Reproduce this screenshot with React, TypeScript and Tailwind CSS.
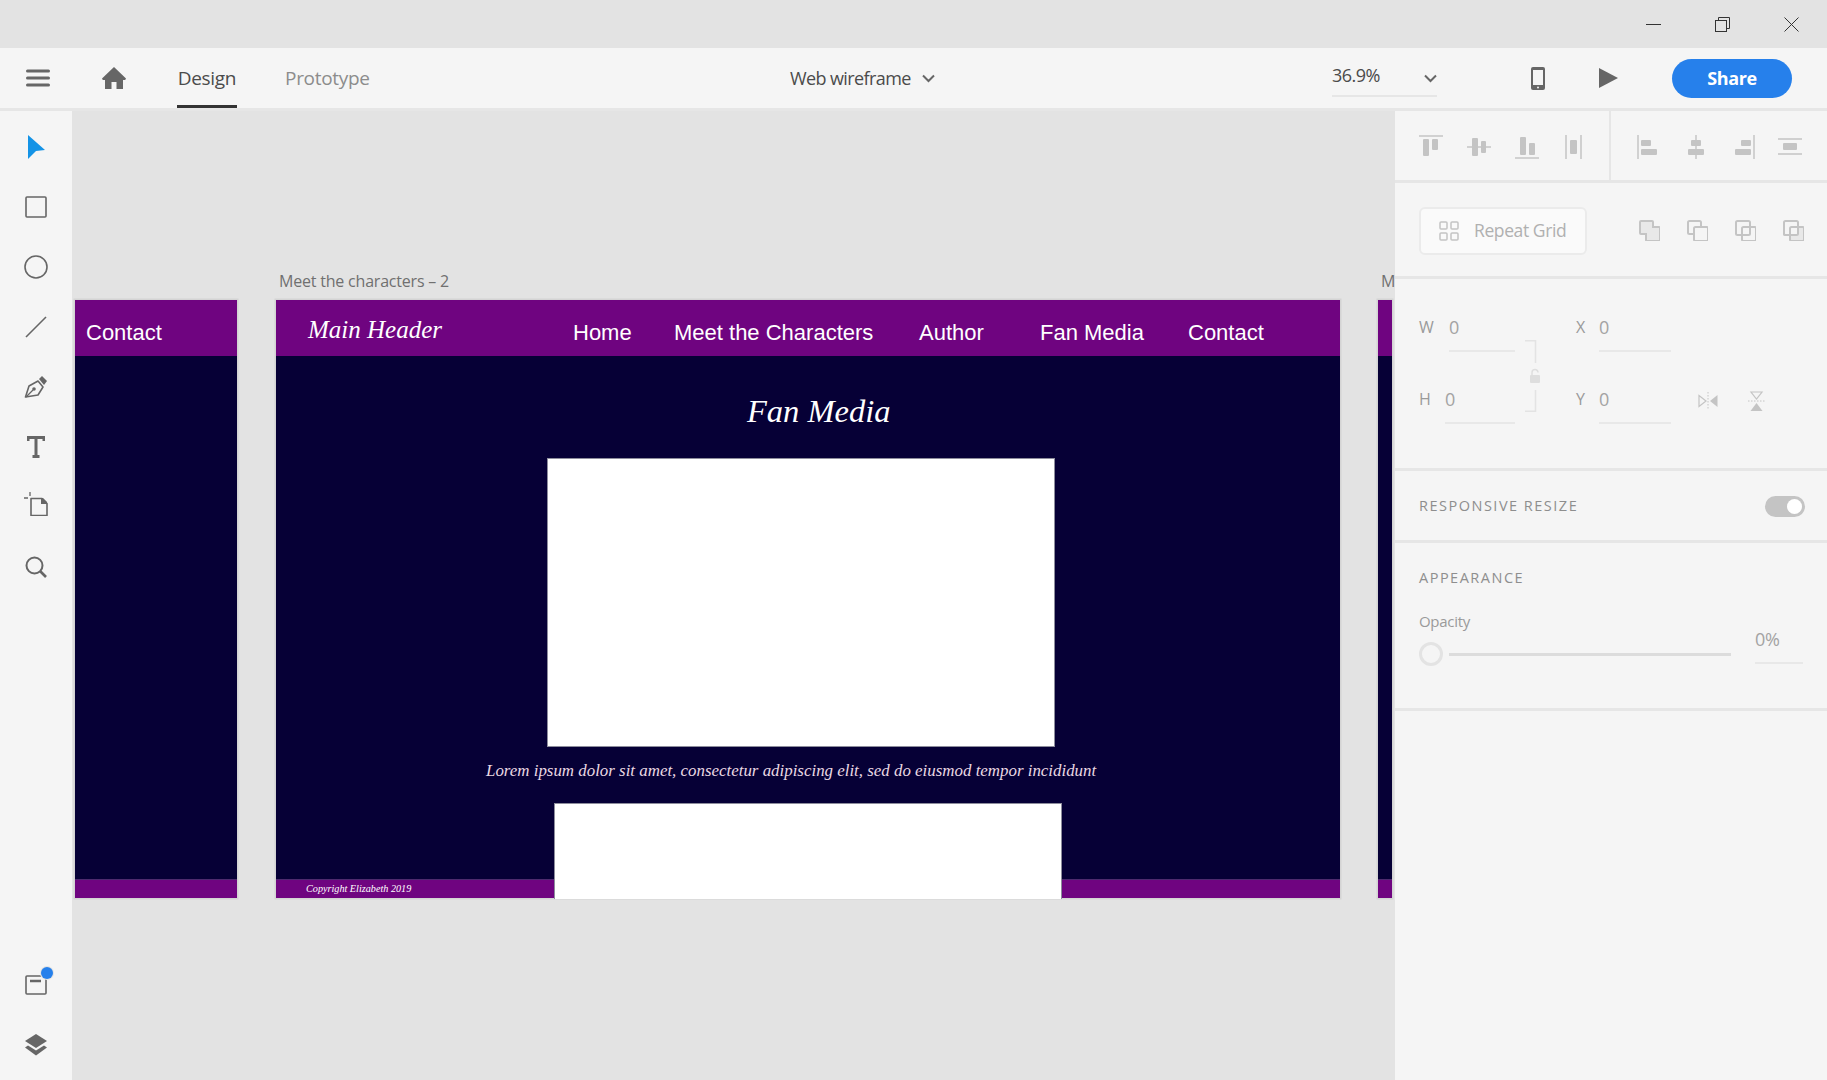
import React from 'react';

const Ico = ({ w, h, children, className = '' }: { w: number; h: number; children: React.ReactNode; className?: string }) => (
  <svg width={w} height={h} viewBox={`0 0 ${w} ${h}`} fill="none" className={`block shrink-0 ${className}`}>
    {children}
  </svg>
);

const G = '#c4c4c4';
const D = '#666666';

const alignIcons = [
  <>
    <path d="M0 1h24" stroke={G} strokeWidth="1.5" />
    <rect x="4" y="4" width="6" height="17" rx="1" fill={G} />
    <rect x="13" y="4" width="6" height="11" rx="1" fill={G} />
  </>,
  <>
    <path d="M0 12h24" stroke={G} strokeWidth="1.5" />
    <rect x="5" y="3" width="6" height="18" rx="1" fill={G} />
    <rect x="14" y="6" width="5" height="12" rx="1" fill={G} />
  </>,
  <>
    <path d="M0 23h24" stroke={G} strokeWidth="1.5" />
    <rect x="5" y="2" width="6" height="18" rx="1" fill={G} />
    <rect x="14" y="8" width="6" height="12" rx="1" fill={G} />
  </>,
  <>
    <path d="M3 0v24M18 0v24" stroke={G} strokeWidth="1.5" />
    <rect x="7" y="5" width="7" height="14" rx="1" fill={G} />
  </>,
  <>
    <path d="M1 0v24" stroke={G} strokeWidth="1.5" />
    <rect x="4" y="5" width="10" height="6" rx="1" fill={G} />
    <rect x="4" y="14" width="16" height="6" rx="1" fill={G} />
  </>,
  <>
    <path d="M12 0v24" stroke={G} strokeWidth="1.5" />
    <rect x="7" y="5" width="10" height="6" rx="1" fill={G} />
    <rect x="4" y="14" width="16" height="6" rx="1" fill={G} />
  </>,
  <>
    <path d="M23 0v24" stroke={G} strokeWidth="1.5" />
    <rect x="10" y="5" width="10" height="6" rx="1" fill={G} />
    <rect x="4" y="14" width="16" height="6" rx="1" fill={G} />
  </>,
  <>
    <path d="M0 4h24M0 19h24" stroke={G} strokeWidth="1.5" />
    <rect x="5" y="8" width="14" height="7" rx="1" fill={G} />
  </>,
];

const boolIcons = [
  <path d="M2 1h11a1 1 0 0 1 1 1v5h6a1 1 0 0 1 1 1v12a1 1 0 0 1-1 1H8a1 1 0 0 1-1-1v-6H2a1 1 0 0 1-1-1V2a1 1 0 0 1 1-1z" fill="#e8e8e8" stroke={G} strokeWidth="2" />,
  <>
    <rect x="1" y="1" width="13" height="13" rx="1.5" stroke={G} strokeWidth="2" />
    <rect x="7" y="7" width="14" height="14" rx="1.5" fill="#f5f5f5" stroke={G} strokeWidth="2" />
  </>,
  <>
    <rect x="1" y="1" width="14" height="14" rx="1.5" stroke={G} strokeWidth="2" />
    <rect x="7" y="7" width="14" height="14" rx="1.5" stroke={G} strokeWidth="2" />
  </>,
  <>
    <path d="M15 8h5v12H8v-5h7z" fill="#e8e8e8" />
    <path d="M1 2.500V14a1 1 0 0 0 1 1h5" stroke={G} strokeWidth="2" />
    <rect x="1" y="1" width="14" height="14" rx="1.5" stroke={G} strokeWidth="2" />
    <rect x="7" y="7" width="14" height="14" rx="1.5" stroke={G} strokeWidth="2" />
  </>,
];

const railTop = [
  <Ico w={17} h={24}><path d="M0 0 17 15l-9 1-8 8z" fill="#1493e6" /></Ico>,
  <Ico w={22} h={22}><rect x="1" y="1" width="20" height="20" rx="1" stroke={D} strokeWidth="1.6" /></Ico>,
  <Ico w={24} h={24}><circle cx="12" cy="12" r="11" stroke={D} strokeWidth="1.6" /></Ico>,
  <Ico w={22} h={22}><path d="M1 21 21 1" stroke={D} strokeWidth="1.6" /></Ico>,
  <Ico w={24} h={24}>
    <path d="M1.500 22 5 11l9-5 5 6-5 8z" stroke={D} strokeWidth="1.6" strokeLinejoin="round" />
    <path d="m15 4 3-3 5 5-3 4z" fill={D} />
    <path d="m2 22 7-7" stroke={D} strokeWidth="1.2" />
    <circle cx="10" cy="14" r="1.800" fill={D} />
  </Ico>,
  <Ico w={18} h={22}>
    <path d="M1 5V1.500h16V5M9 1.500V20.500M5.500 20.500h7" stroke={D} strokeWidth="3" />
  </Ico>,
  <Ico w={24} h={24} className="-translate-y-[3px]">
    <path d="M7 6.500h11l5 5v12H7z" stroke={D} strokeWidth="1.6" strokeLinejoin="round" />
    <path d="M17 6h2l4 4v2h-6z" fill={D} />
    <path d="M6 0v4M0 6h4" stroke={D} strokeWidth="1.300" />
  </Ico>,
  <Ico w={22} h={22}>
    <circle cx="9.500" cy="9.500" r="8" stroke={D} strokeWidth="2" />
    <path d="m15 15 6 6" stroke={D} strokeWidth="2.600" />
  </Ico>,
];

const Field = ({ label, labelW, inputW, mb = '' }: { label: string; labelW: string; inputW: string; mb?: string }) => (
  <div className={`flex items-start ${mb}`}>
    <span className={`${labelW} text-[16px] leading-[36px] text-[#9a9a9a]`}>{label}</span>
    <span className={`${inputW} h-[43px] border-b-2 border-[#e8e8e8] text-[18px] leading-[36px] text-[#a3a3a3]`}>0</span>
  </div>
);

const Artboard = ({ className, children }: { className: string; children: React.ReactNode }) => (
  <div className={`absolute top-[300px] h-[598px] flex flex-col bg-[#060036] shadow-[0_0_0_1.5px_#d4d4d4] ${className}`}>{children}</div>
);

export default function App() {
  return (
    <div className="w-[1827px] h-[1080px] overflow-hidden flex flex-col bg-[#e3e3e3] font-['Open_Sans',sans-serif] text-[#4b4b4b]">
      {/* window chrome */}
      <div className="h-12 shrink-0 flex items-center justify-end gap-[54px] pr-[28px]">
        <Ico w={15} h={15}><path d="M0 7.500h15" stroke="#333" strokeWidth="1" /></Ico>
        <Ico w={15} h={15}>
          <rect x="0.500" y="3.500" width="11" height="11" stroke="#333" />
          <path d="M3.500 3.500V.500h11v11h-3" stroke="#333" />
        </Ico>
        <Ico w={15} h={15}><path d="m.500.500 14 14M14.500.500l-14 14" stroke="#333" /></Ico>
      </div>

      {/* top bar */}
      <div className="h-[63px] shrink-0 flex items-center bg-[#f5f5f5] border-b-[3px] border-[#e6e6e6] relative z-20">
        <div className="pl-[26px] w-[102px]">
          <Ico w={24} h={18}><path d="M1.500 2h21M1.500 9h21M1.500 16h21" stroke={D} strokeWidth="3" strokeLinecap="round" /></Ico>
        </div>
        <div className="w-[75px]">
          <Ico w={24} h={22}>
            <path d="M12 0 24 11.500l-.8 1.500H21v9h-6.500v-7h-5v7H3v-9H.8L0 11.500z" fill={D} />
          </Ico>
        </div>
        <div className="h-full w-[60px] flex items-center justify-center border-b-[3px] border-[#333] text-[19px] tracking-[-0.3px] pt-[3px]">Design</div>
        <div className="ml-[48px] w-[84px] text-[19px] tracking-[-0.3px] text-[#8c8c8c]">Prototype</div>
        <div className="ml-[421px] w-[120px] text-[18px] tracking-[-0.6px] whitespace-nowrap">Web wireframe</div>
        <Ico w={13} h={9} className="ml-[12px]"><path d="m1 1.500 5.500 5.500L12 1.500" stroke={D} strokeWidth="2" /></Ico>
        <div className="ml-[397px] w-[105px] h-[37px] flex items-start justify-between border-b-2 border-[#e6e6e6] text-[18px] leading-[31px] tracking-[-0.5px]">
          <span>36.9%</span>
          <Ico w={13} h={9} className="mt-[14px]"><path d="m1 1.500 5.500 5.500L12 1.500" stroke={D} strokeWidth="2" /></Ico>
        </div>
        <Ico w={14} h={23} className="ml-[94px]">
          <rect width="14" height="23" rx="2" fill={D} />
          <rect x="2" y="3" width="10" height="15" fill="#f5f5f5" />
          <circle cx="7" cy="20.500" r="1" fill="#f5f5f5" />
        </Ico>
        <Ico w={19} h={20} className="ml-[54px]"><path d="M0 0 19 10 0 20z" fill={D} /></Ico>
        <button className="ml-[54px] w-[120px] h-[39px] rounded-full bg-[#2680eb] text-white text-[18px] font-bold tracking-[-0.4px]">Share</button>
      </div>

      <div className="flex-1 flex min-h-0">
        {/* tool rail */}
        <div className="w-[72px] shrink-0 bg-[#f5f5f5] flex flex-col justify-between items-center py-[6px]">
          <div className="flex flex-col items-center">
            {railTop.map((icon, i) => (
              <div key={i} className="w-[72px] h-[60px] flex items-center justify-center">{icon}</div>
            ))}
          </div>
          <div className="flex flex-col items-center">
            <div className="relative h-[60px] w-[72px] flex items-center justify-center -translate-y-px">
              <Ico w={22} h={20}>
                <rect x="1" y="1" width="20" height="18" rx="1" stroke={D} strokeWidth="1.6" />
                <path d="M5 6h11" stroke={D} strokeWidth="2.500" />
              </Ico>
              <span className="absolute top-[12px] left-[41px] w-3 h-3 rounded-full bg-[#2680eb] shadow-[0_0_0_1px_#e3e3e3]" />
            </div>
            <div className="h-[58px] w-[72px] flex items-center justify-center">
              <Ico w={22} h={22}>
                <path d="M11 0 22 7l-11 7L0 7z" fill={D} />
                <path d="m3 11.500 8 5 8-5 3 2-11 8-11-8z" fill={D} />
              </Ico>
            </div>
          </div>
        </div>

        {/* canvas */}
        <div className="relative flex-1 min-w-0 overflow-hidden">
          <div className="absolute inset-0 -left-[72px] -top-[111px]">
            <span className="absolute left-[279px] top-[269px] text-[16px] tracking-[-0.2px] text-[#707070] whitespace-nowrap">Meet the characters – 2</span>
            <span className="absolute left-[1381px] top-[269px] text-[16px] text-[#707070]">Meet</span>

            <Artboard className="left-[75px] w-[162px]">
              <div className="h-[56px] shrink-0 bg-[#6f0480] flex items-center pl-[11px] pt-[9px] font-['Liberation_Sans',sans-serif] text-[22px] text-white">Contact</div>
              <div className="flex-1" />
              <div className="h-[19px] shrink-0 bg-[#6f0480] border-t border-[#4d2a6e]" />
            </Artboard>

            <Artboard className="left-[276px] w-[1064px]">
              <div className="h-[56px] shrink-0 bg-[#6f0480] flex items-center pt-[9px] text-white font-['Liberation_Sans',sans-serif] text-[22px] whitespace-nowrap">
                <span className="ml-[32px] w-[135px] -mt-[5px] font-['Liberation_Serif',serif] italic text-[25px]">Main Header</span>
                <span className="ml-[130px] w-[59px]">Home</span>
                <span className="ml-[42px] w-[201px]">Meet the Characters</span>
                <span className="ml-[44px] w-[66px]">Author</span>
                <span className="ml-[55px] w-[104px]">Fan Media</span>
                <span className="ml-[44px]">Contact</span>
              </div>
              <div className="h-[523px] shrink-0 flex flex-col relative z-10">
                <h1 className="ml-[471px] mt-[33px] h-[44px] shrink-0 leading-[44px] font-['Liberation_Serif',serif] italic text-[32.500px] text-white whitespace-nowrap">Fan Media</h1>
                <div className="ml-[271px] mt-[25px] w-[508px] h-[289px] shrink-0 bg-white border border-[#8d8d9c]" />
                <p className="ml-[210px] mt-[12px] h-[24px] shrink-0 leading-[24px] font-['Liberation_Serif',serif] italic text-[16.900px] text-[#ead9e3] whitespace-nowrap">Lorem ipsum dolor sit amet, consectetur adipiscing elit, sed do eiusmod tempor incididunt</p>
                <div className="ml-[278px] mt-[20px] w-[508px] h-[96px] shrink-0 bg-white border border-[#8d8d9c] border-b-0" />
              </div>
              <div className="h-[19px] shrink-0 bg-[#6f0480] border-t border-[#4d2a6e] flex items-center pl-[30px] font-['Liberation_Serif',serif] italic text-[10.200px] text-white">Copyright Elizabeth 2019</div>
            </Artboard>

            <Artboard className="left-[1378px] w-[14px]">
              <div className="h-[56px] shrink-0 bg-[#6f0480]" />
              <div className="flex-1" />
              <div className="h-[19px] shrink-0 bg-[#6f0480] border-t border-[#4d2a6e]" />
            </Artboard>
          </div>
        </div>

        {/* property inspector */}
        <div className="w-[432px] shrink-0 bg-[#f5f5f5] relative z-10 flex flex-col">
          <div className="h-[72px] shrink-0 flex border-b-[3px] border-[#e6e6e6]">
            <div className="w-[216px] flex items-center gap-[24px] pt-[2px] pl-[24px] border-r-2 border-[#e6e6e6]">
              {alignIcons.slice(0, 4).map((icon, i) => <Ico key={i} w={24} h={24}>{icon}</Ico>)}
            </div>
            <div className="flex items-center gap-[23px] pt-[2px] pl-[26px]">
              {alignIcons.slice(4).map((icon, i) => <Ico key={i} w={24} h={24}>{icon}</Ico>)}
            </div>
          </div>

          <div className="h-[96px] shrink-0 flex items-center pt-[2px] pl-[24px] border-b-[3px] border-[#e6e6e6]">
            <div className="w-[168px] h-[48px] flex items-center pl-[18px] gap-[15px] rounded-md border-2 border-[#ebebeb] bg-[#fafafa] text-[17.500px] tracking-[-0.4px] text-[#b0b0b0] whitespace-nowrap">
              <Ico w={20} h={20}>
                <rect x="1" y="1" width="7" height="7" rx="1" stroke={G} strokeWidth="1.500" />
                <rect x="12" y="1" width="7" height="7" rx="1" stroke={G} strokeWidth="1.500" />
                <rect x="1" y="12" width="7" height="7" rx="1" stroke={G} strokeWidth="1.500" />
                <rect x="12" y="12" width="7" height="7" rx="1" stroke={G} strokeWidth="1.500" />
              </Ico>
              Repeat Grid
            </div>
            <div className="ml-[52px] flex gap-[27px]">
              {boolIcons.map((icon, i) => <Ico key={i} w={21} h={21}>{icon}</Ico>)}
            </div>
          </div>

          <div className="h-[192px] shrink-0 flex items-start pt-[30px] pl-[24px] border-b-[3px] border-[#e6e6e6]">
            <div className="flex flex-col w-[105px]">
              <Field label="W" labelW="w-[30px]" inputW="w-[66px]" mb="mb-[29px]" />
              <Field label="H" labelW="w-[26px]" inputW="w-[70px]" />
            </div>
            <Ico w={16} h={72} className="mt-[31px]">
              <path d="M1 .800h10.500V23M11.500 50v21.200H1" stroke="#e3e3e3" strokeWidth="1.500" />
              <rect x="6" y="35" width="10" height="8" rx="1" fill="#dedede" />
              <path d="M8 35v-2.500a3 3 0 0 1 6 0" stroke="#dedede" strokeWidth="1.500" />
            </Ico>
            <div className="ml-[36px] flex flex-col w-[95px]">
              <Field label="X" labelW="w-[23px]" inputW="w-[72px]" mb="mb-[29px]" />
              <Field label="Y" labelW="w-[23px]" inputW="w-[72px]" />
            </div>
            <div className="ml-[27px] mt-[82px] flex items-center gap-[30px]">
              <Ico w={20} h={18}>
                <path d="M1 3.500v11l7-5.500z" stroke={G} strokeWidth="1.200" />
                <path d="M19.500 3v12l-7.500-6z" fill={G} />
                <path d="M10 0v18" stroke={G} strokeWidth="1" strokeDasharray="1.500 1.500" />
              </Ico>
              <Ico w={17} h={20}>
                <path d="M3 1h11L8.500 8z" stroke={G} strokeWidth="1.200" />
                <path d="M2.500 20h12l-6-8z" fill={G} />
                <path d="M0 10h17" stroke={G} strokeWidth="1" strokeDasharray="1.500 1.500" />
              </Ico>
            </div>
          </div>

          <div className="h-[72px] shrink-0 flex items-center justify-between pl-[24px] pr-[22px] border-b-[3px] border-[#e6e6e6]">
            <span className="text-[14.500px] tracking-[1.500px] text-[#8e8e8e]">RESPONSIVE RESIZE</span>
            <div className="w-[40px] h-[21px] mt-[2px] rounded-full bg-[#c4c4c4] flex items-center justify-end pr-[3px]">
              <span className="w-[15px] h-[15px] rounded-full bg-white" />
            </div>
          </div>

          <div className="h-[168px] shrink-0 flex flex-col pl-[24px] pt-[23px] border-b-[3px] border-[#e6e6e6]">
            <span className="h-[24px] shrink-0 leading-[24px] text-[14.500px] tracking-[1.500px] text-[#8e8e8e]">APPEARANCE</span>
            <div className="mt-[19px] flex items-start">
              <div className="w-[312px] flex flex-col">
                <span className="h-[24px] leading-[24px] text-[15px] tracking-[-0.3px] text-[#9a9a9a]">Opacity</span>
                <div className="mt-[9px] flex items-center gap-[6px]">
                  <span className="w-6 h-6 rounded-full border-[3px] border-[#e3e3e3]" />
                  <span className="w-[282px] h-[3px] bg-[#dcdcdc]" />
                </div>
              </div>
              <span className="ml-[24px] mt-[17px] w-[48px] h-[38px] border-b-2 border-[#e8e8e8] text-[18px] leading-[26px] tracking-[-0.4px] text-[#a3a3a3]">0%</span>
            </div>
          </div>
        </div>
      </div>
    </div>
  );
}
